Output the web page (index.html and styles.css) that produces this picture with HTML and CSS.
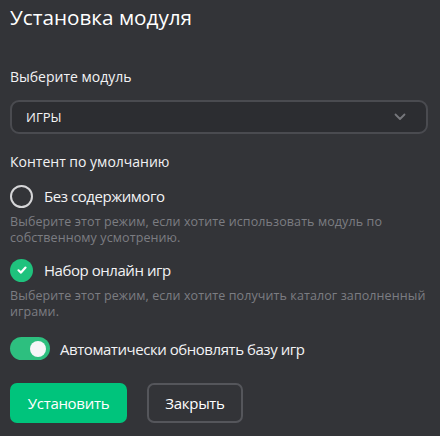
FILE: index.html
```html
<!DOCTYPE html>
<html lang="ru">
<head>
<meta charset="utf-8">
<link rel="stylesheet" href="styles.css">
</head>
<body>
<div class="panel">
  <h1 class="title">Установка модуля</h1>
  <div class="label">Выберите модуль</div>
  <div class="select">
    <span class="select-value">ИГРЫ</span>
    <svg class="chevron" width="12" height="8" viewBox="0 0 12 8"><path d="M1.5 1.5 L6 6 L10.5 1.5" fill="none" stroke="#76777c" stroke-width="1.8" stroke-linecap="round" stroke-linejoin="round"/></svg>
  </div>
  <div class="section">Контент по умолчанию</div>
  <div class="option">
    <span class="radio"></span>
    <span class="option-label">Без содержимого</span>
  </div>
  <div class="desc">Выберите этот режим, если хотите использовать модуль по собственному усмотрению.</div>
  <div class="option">
    <span class="radio checked">
      <svg width="14" height="14" viewBox="0 0 14 14"><path d="M3.5 7.3 L6 9.6 L10.5 4.6" fill="none" stroke="#fff" stroke-width="2.2" stroke-linecap="round" stroke-linejoin="round"/></svg>
    </span>
    <span class="option-label">Набор онлайн игр</span>
  </div>
  <div class="desc">Выберите этот режим, если хотите получить каталог заполненный играми.</div>
  <div class="toggle-row">
    <span class="toggle"><span class="knob"></span></span>
    <span class="toggle-label">Автоматически обновлять базу игр</span>
  </div>
  <div class="actions">
    <button class="btn btn-primary">Установить</button>
    <button class="btn btn-outline">Закрыть</button>
  </div>
</div>
</body>
</html>
```
FILE: styles.css
```css
* { box-sizing: border-box; }
html, body {
  margin: 0;
  padding: 0;
  background: #333438;
}
body {
  font-family: "Open Sans", "Noto Sans", sans-serif;
  color: #f2f2f4;
}
.panel {
  padding: 3px 12px 0 10px;
  display: flex;
  flex-direction: column;
}
.title {
  margin: 0;
  font-size: 20.7px;
  font-weight: 400;
  line-height: 28px;
  color: #ffffff;
}
.label {
  margin-top: 36px;
  font-size: 14px;
  line-height: 20px;
}
.select {
  margin-top: 13px;
  height: 34px;
  border: 2px solid #4a4b50;
  border-radius: 9px;
  background: #2c2d31;
  display: flex;
  align-items: center;
  justify-content: space-between;
  padding: 0 20px 0 14px;
}
.select-value {
  font-size: 13px;
  color: #f4f4f6;
}
.section {
  margin-top: 18px;
  font-size: 14px;
  line-height: 20px;
}
.option {
  margin-top: 12px;
  display: flex;
  align-items: center;
  gap: 11px;
  height: 24px;
}
.radio {
  width: 23px;
  height: 23px;
  border-radius: 50%;
  border: 2px solid #d6d6d8;
  display: flex;
  align-items: center;
  justify-content: center;
  flex: none;
}
.radio.checked {
  border: none;
  background: #1fc27d;
}
.option-label {
  font-size: 15px;
  letter-spacing: -0.45px;
}
.desc {
  margin-top: 6px;
  font-size: 12.5px;
  line-height: 16px;
  color: #7c7d82;
  letter-spacing: 0.1px;
}
.toggle-row {
  margin-top: 17px;
  display: flex;
  align-items: center;
  gap: 10px;
}
.toggle {
  width: 40px;
  height: 23px;
  border-radius: 12px;
  background: #2dbf7f;
  display: flex;
  align-items: center;
  justify-content: flex-end;
  padding-right: 4px;
  flex: none;
}
.knob {
  width: 16px;
  height: 16px;
  border-radius: 50%;
  background: #f6f6f8;
}
.toggle-label {
  font-size: 15px;
  letter-spacing: -0.45px;
}
.actions {
  margin-top: 23px;
  display: flex;
  gap: 20px;
}
.btn {
  height: 40px;
  border-radius: 7px;
  font-family: inherit;
  font-size: 15px;
  letter-spacing: -0.3px;
  color: #fff;
  padding: 0;
}
.btn-primary {
  width: 117px;
  background: #00c47c;
  border: none;
}
.btn-outline {
  width: 96px;
  background: transparent;
  border: 2px solid #55565b;
}
```
